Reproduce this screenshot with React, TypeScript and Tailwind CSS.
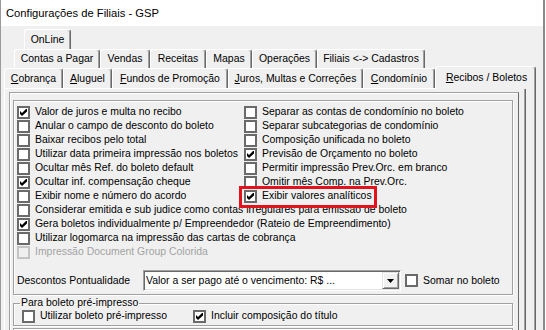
import React from "react";

function Check({ checked = false, disabled = false }: { checked?: boolean; disabled?: boolean }) {
  return (
    <span
      className={
        disabled
          ? "w-[13px] h-[13px] shrink-0 border-2 border-[#c4c4c4] bg-[#f0f0f0] flex items-center justify-center"
          : "w-[13px] h-[13px] shrink-0 border-2 border-[#6a6a6a] bg-white flex items-center justify-center"
      }
    >
      {checked && (
        <svg width="7" height="7" viewBox="0 0 7 7">
          <polygon points="0,2 2,4 6,0 7,0 7,2.6 2,7 0,5" fill="#000" />
        </svg>
      )}
    </span>
  );
}

function Row({ checked = false, disabled = false, children }: { checked?: boolean; disabled?: boolean; children: React.ReactNode }) {
  return (
    <div className="h-[14px] flex items-center gap-[5px] whitespace-nowrap">
      <Check checked={checked} disabled={disabled} />
      <span className={disabled ? "text-[#a3a3a3]" : "text-black"}>{children}</span>
    </div>
  );
}

function Tab({ cls, children }: { cls: string; children: React.ReactNode }) {
  return (
    <div
      className={
        "h-full flex items-center justify-center border-t border-l border-white rounded-tl-[3px] rounded-tr-[3px] border-r border-r-[#696969] shadow-[inset_-1px_0_0_#a0a0a0] whitespace-nowrap " +
        cls
      }
    >
      {children}
    </div>
  );
}

export default function App() {
  return (
    <div className="w-[546px] h-[330px] overflow-hidden bg-white">
      <div className="w-[545px] h-[330px] border-l border-l-[#9b9b9b] border-r-2 border-r-[#8a8a8a] bg-[#f0f0f0] flex flex-col font-['Liberation_Sans',Arial,sans-serif] text-[10.45px] leading-[14px] text-black">
        <div className="h-[26px] shrink-0 bg-white flex items-center pl-[5px] text-[11.2px]">
          Configurações de Filiais - GSP
        </div>

        <div className="pt-[3px] pl-[3px] flex flex-col">
          <div className="h-[20px] flex pl-[20px]">
            <Tab cls="w-[47px]">OnLine</Tab>
          </div>
          <div className="h-[19px] flex pl-[10px]">
            <Tab cls="w-[86px]">Contas a Pagar</Tab>
            <Tab cls="w-[50px]">Vendas</Tab>
            <Tab cls="w-[56px]">Receitas</Tab>
            <Tab cls="w-[46px]">Mapas</Tab>
            <Tab cls="w-[65px]">Operações</Tab>
            <Tab cls="w-[108px]">Filiais &lt;-&gt; Cadastros</Tab>
          </div>
          <div className="h-[20px] flex items-end">
            <Tab cls="w-[59px]">
              <span className="underline">C</span>obrança
            </Tab>
            <Tab cls="w-[49px]">
              <span className="underline">A</span>luguel
            </Tab>
            <Tab cls="w-[116px]">
              <span className="underline">F</span>undos de Promoção
            </Tab>
            <Tab cls="w-[135px]">
              <span className="underline">J</span>uros, Multas e Correções
            </Tab>
            <Tab cls="w-[72px]">
              <span className="underline">C</span>ondomínio
            </Tab>
            <div className="relative z-10 w-[101px] h-[23px] -mb-[1px] flex items-start justify-center pt-[4px] pl-[2px] bg-[#f0f0f0] border-t border-l border-white rounded-tl-[3px] rounded-tr-[3px] border-r border-r-[#696969] shadow-[inset_-1px_0_0_#a0a0a0] whitespace-nowrap">
              <span>
                <span className="underline">R</span>ecibos / Boletos
              </span>
            </div>
          </div>

          {/* tab page */}
          <div className="w-[532px] h-[260px] border-l border-t border-white border-r border-r-[#696969] shadow-[inset_-1px_0_0_#a0a0a0] flex pl-[4px] pt-[3px]">
            {/* panel */}
            <div className="w-[510px] h-[260px] border border-t-[#a0a0a0] border-l-[#a0a0a0] border-r-[#696969] border-b-[#696969] shadow-[inset_1px_1px_0_#fff] pl-[3px] pt-[7px] flex flex-col">
              {/* group 1 */}
              <div className="relative w-[500px] h-[195px] shrink-0 border border-[#a0a0a0] shadow-[inset_1px_1px_0_#fff,1px_1px_0_#fff] pl-[3px] pt-[4px] flex flex-col">
                <div className="grid grid-cols-[227px_1fr]">
                  <Row checked>Valor de juros e multa no recibo</Row>
                  <Row>Separar as contas de condomínio no boleto</Row>
                  <Row>Anular o campo de desconto do boleto</Row>
                  <Row>Separar subcategorias de condomínio</Row>
                  <Row>Baixar recibos pelo total</Row>
                  <Row>Composição unificada no boleto</Row>
                  <Row>Utilizar data primeira impressão nos boletos</Row>
                  <Row checked>Previsão de Orçamento no boleto</Row>
                  <Row>Ocultar mês Ref. do boleto default</Row>
                  <Row>Permitir impressão Prev.Orc. em branco</Row>
                  <Row checked>Ocultar inf. compensação cheque</Row>
                  <Row>Omitir mês Comp. na Prev.Orc.</Row>
                  <Row>Exibir nome e número do acordo</Row>
                  <Row checked>Exibir valores analíticos</Row>
                </div>
                <Row>Considerar emitida e sub judice como contas irregulares para emissão de boleto</Row>
                <Row checked>Gera boletos individualmente p/ Empreendedor (Rateio de Empreendimento)</Row>
                <Row>Utilizar logomarca na impressão das cartas de cobrança</Row>
                <Row disabled>Impressão Document Group Colorida</Row>

                <div className="mt-[11px] h-[21px] flex items-center">
                  <span className="w-[126px] whitespace-nowrap">Descontos Pontualidade</span>
                  <div className="w-[258px] h-[21px] bg-white border border-t-[#a0a0a0] border-l-[#a0a0a0] border-r-white border-b-white shadow-[inset_1px_1px_0_#696969,inset_-1px_-1px_0_#e3e3e3] flex items-center pl-[2px] pr-[1px]">
                    <span className="whitespace-nowrap">Valor a ser pago até o vencimento: R$ ...</span>
                    <div className="ml-auto w-[17px] h-[17px] bg-[#f0f0f0] border border-t-[#e3e3e3] border-l-[#e3e3e3] border-r-[#696969] border-b-[#696969] shadow-[inset_1px_1px_0_#fff,inset_-1px_-1px_0_#a0a0a0] flex items-center justify-center">
                      <svg width="7" height="4" viewBox="0 0 7 4">
                        <polygon points="0,0 7,0 3.5,4" fill="#000" />
                      </svg>
                    </div>
                  </div>
                  <div className="ml-[4px] flex items-center gap-[5px] whitespace-nowrap">
                    <Check />
                    <span>Somar no boleto</span>
                  </div>
                </div>

                <div className="absolute left-[225px] top-[85px] w-[138px] h-[22px] border-[3px] border-[#e3131d]" />
              </div>

              {/* group 2 */}
              <fieldset className="mt-[2px] w-[500px] h-[29px] shrink-0 border border-[#a0a0a0] shadow-[inset_1px_1px_0_#fff,1px_1px_0_#fff] p-0">
                <legend className="ml-[6px] px-[1px] leading-[12px] whitespace-nowrap">Para boleto pré-impresso</legend>
                <div className="h-[14px] flex items-center pl-[8px]">
                  <div className="w-[171px] flex items-center gap-[5px] whitespace-nowrap">
                    <Check />
                    <span>Utilizar boleto pré-impresso</span>
                  </div>
                  <div className="flex items-center gap-[5px] whitespace-nowrap">
                    <Check checked />
                    <span>Incluir composição do título</span>
                  </div>
                </div>
              </fieldset>

              {/* group 3 */}
              <div className="mt-[2px] w-[500px] h-[40px] shrink-0 border border-[#a0a0a0] shadow-[inset_1px_1px_0_#fff,1px_1px_0_#fff]" />
            </div>
            <div className="ml-[5px] w-[2px] h-[260px] -mt-[3px] border-l border-l-[#a0a0a0] border-r border-r-[#696969]" />
          </div>
        </div>
      </div>
    </div>
  );
}
